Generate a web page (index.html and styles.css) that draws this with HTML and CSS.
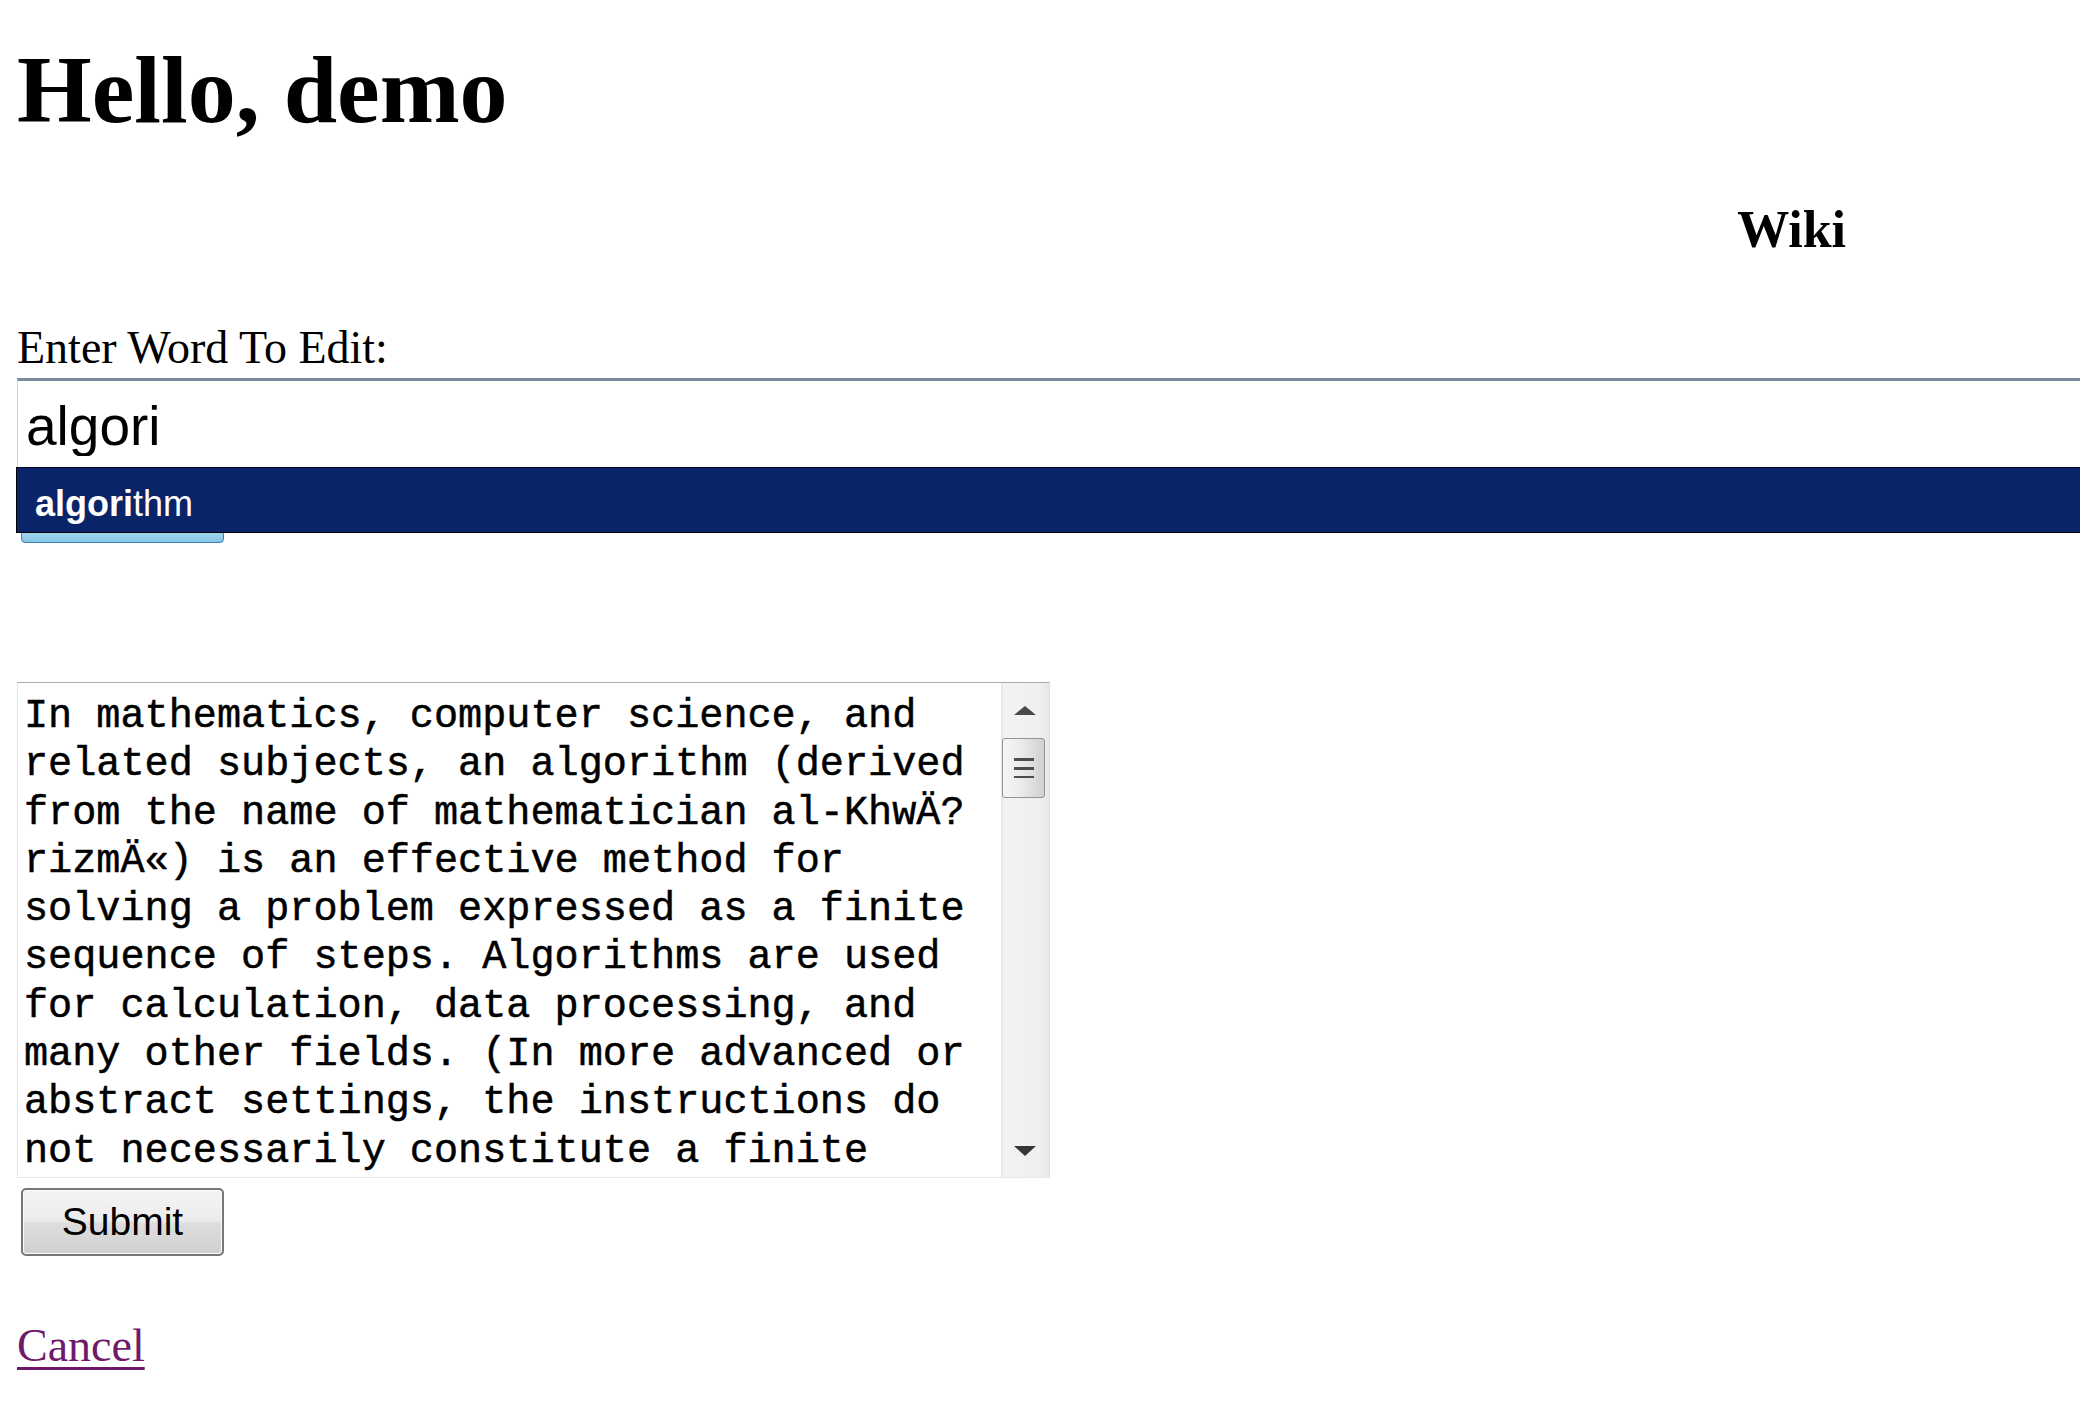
FILE: index.html
```html
<!DOCTYPE html>
<html lang="en">
<head>
<meta charset="utf-8">
<title>Wiki - Edit Word</title>
<link rel="stylesheet" href="styles.css">
</head>
<body>
<h1 class="greeting">Hello, demo</h1>
<div class="brand-row"><h2 class="brand">Wiki</h2></div>
<form class="edit-form" action="#" method="post">
  <label class="field-label" for="word">Enter Word To Edit:</label>
  <div class="field">
    <input id="word" class="word-input" type="text" name="word" value="algori" autocomplete="off">
    <ul class="suggestions">
      <li class="suggestion is-active"><b>algori</b>thm</li>
    </ul>
  </div>
  <div class="lookup-btn" aria-hidden="true"></div>
  <div class="editor">
    <textarea class="editor-text" name="definition">In mathematics, computer science, and related subjects, an algorithm (derived from the name of mathematician al-KhwÄ?&#8203;rizmÄ«) is an effective method for solving a problem expressed as a finite sequence of steps. Algorithms are used for calculation, data processing, and many other fields. (In more advanced or abstract settings, the instructions do not necessarily constitute a finite sequence, and even not necessarily a sequence; see, e.g., "nondeterministic algorithm".)</textarea>
    <div class="scrollbar" aria-hidden="true">
      <div class="sb-btn sb-up"><span class="sb-arrow up"></span></div>
      <div class="sb-thumb"><span class="grip"></span></div>
      <div class="sb-track"></div>
      <div class="sb-btn sb-down"><span class="sb-arrow down"></span></div>
    </div>
  </div>
  <button class="submit-btn" type="submit">Submit</button>
</form>
<p class="cancel-row"><a class="cancel-link" href="#">Cancel</a></p>
</body>
</html>
```

FILE: styles.css
```css
html, body {
  margin: 0;
  background: #ffffff;
}

body {
  padding: 0 0 0 17px;
  font-family: "Liberation Serif", "Times New Roman", serif;
  color: #000000;
  overflow: hidden;
}

.greeting {
  margin: 40px 0 0;
  font-family: "Liberation Serif", serif;
  font-weight: bold;
  font-size: 96px;
  line-height: 100px;
}

.brand-row {
  display: flex;
  justify-content: flex-end;
  margin: 60px 234px 0 0;
}

.brand {
  margin: 0;
  font-family: "Liberation Serif", serif;
  font-weight: bold;
  font-size: 52px;
  line-height: 60px;
}

.edit-form {
  margin: 0;
}

.field-label {
  display: block;
  margin-top: 62px;
  font-size: 46px;
  line-height: 52px;
}

.field {
  position: relative;
  margin-top: 4px;
}

.word-input {
  display: block;
  box-sizing: content-box;
  width: calc(100% - 9px);
  height: 60px;
  margin: 0;
  padding: 15px 0 11px 8px;
  border: 0;
  border-top: 3px solid #7a8da0;
  border-left: 1px solid #c7d1db;
  font-family: "Liberation Sans", Arial, sans-serif;
  font-size: 55px;
  line-height: 60px;
  color: #000000;
  background: #ffffff;
  outline: none;
}

.suggestions {
  position: absolute;
  top: 100%;
  left: -1px;
  right: 0;
  margin: 0;
  padding: 0;
  list-style: none;
  background: #0a246a;
  border-top: 1px solid #020a22;
  border-bottom: 1px solid #000000;
  border-left: 1px solid #000000;
  z-index: 2;
}

.suggestion {
  padding: 16px 0 8px 18px;
  font-family: "Liberation Sans", Arial, sans-serif;
  font-size: 36px;
  line-height: 40px;
  color: #ffffff;
}

.suggestion b {
  font-weight: bold;
}

.lookup-btn {
  width: 203px;
  height: 68px;
  box-sizing: border-box;
  margin: 8px 0 0 4px;
  border: 1px solid #3c7fb1;
  border-radius: 4px;
  background: linear-gradient(#eaf6fd, #bfe5f8 70%, #86c6e6 100%);
}

.editor {
  display: flex;
  align-items: flex-start;
  box-sizing: border-box;
  width: 1033px;
  height: 496px;
  margin-top: 139px;
  border: 1px solid;
  border-color: #abadb3 #dbdfe6 #e3e9ef #e2e3ea;
  background: #ffffff;
}

.editor-text {
  flex: 1;
  min-width: 0;
  box-sizing: border-box;
  height: 493px;
  margin: 0;
  padding: 10px 0 0 6px;
  border: 0;
  font-family: "Liberation Mono", "Courier New", monospace;
  font-size: 40.2px;
  line-height: 48.3px;
  color: #000000;
  -webkit-text-stroke: 0.5px #000000;
  background: transparent;
  resize: none;
  overflow: hidden;
  outline: none;
}

.scrollbar {
  flex: none;
  align-self: stretch;
  display: flex;
  flex-direction: column;
  width: 48px;
  background: linear-gradient(90deg, #e4e4e4 0, #f3f3f3 3px, #f0f0f0 80%, #e8e8e8 100%);
}

.sb-btn {
  display: flex;
  align-items: center;
  justify-content: center;
  flex: none;
}

.sb-up {
  height: 55px;
}

.sb-down {
  height: 52px;
}

.sb-arrow {
  width: 0;
  height: 0;
  border-left: 11px solid transparent;
  border-right: 11px solid transparent;
}

.sb-arrow.up {
  border-bottom: 9px solid #4a4a4a;
}

.sb-arrow.down {
  border-top: 10px solid #363636;
}

.sb-thumb {
  flex: none;
  display: flex;
  align-items: center;
  justify-content: center;
  box-sizing: border-box;
  height: 60px;
  margin: 0 4px 0 1px;
  border: 1px solid #949494;
  border-radius: 3px;
  background: linear-gradient(90deg, #f6f6f6 0%, #ebebeb 45%, #d0d0d0 100%);
}

.grip {
  width: 20px;
  height: 20px;
  background: repeating-linear-gradient(to bottom, #4e4e4e 0, #4e4e4e 3px, transparent 3px, transparent 9px);
}

.sb-track {
  flex: 1;
}

.submit-btn {
  display: block;
  box-sizing: border-box;
  width: 203px;
  height: 68px;
  margin: 10px 0 0 4px;
  padding: 0;
  border: 2px solid #777777;
  border-radius: 5px;
  background: linear-gradient(#f4f4f4 0%, #ececec 48%, #dedede 52%, #d0d0d0 100%);
  box-shadow: inset 0 0 0 1px #fbfbfb;
  font-family: "Liberation Sans", Arial, sans-serif;
  font-size: 39px;
  color: #000000;
}

.cancel-row {
  margin: 64px 0 0;
  font-size: 46px;
  line-height: 52px;
}

.cancel-link {
  color: #6d1a6d;
  text-decoration: underline;
  text-decoration-thickness: 3px;
  text-underline-offset: 6px;
}
```
